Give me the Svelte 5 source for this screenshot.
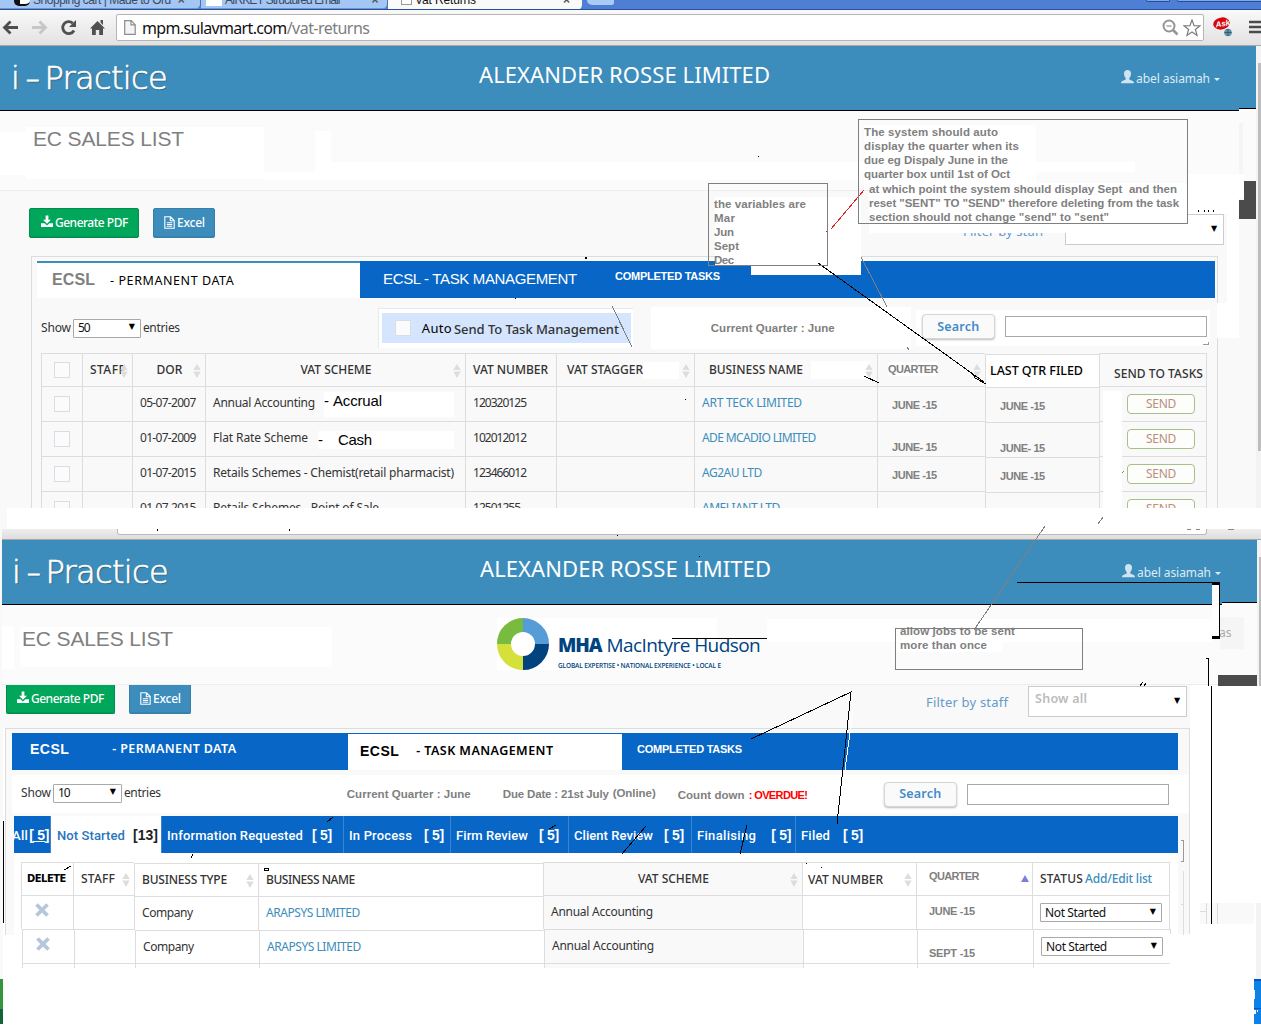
<script>
  // Spreads a label's letters so that it takes up the given width.
  function fit(node, width) {
    const apply = (w) => {
      node.style.letterSpacing = '0px';
      const n = node.textContent.length;
      const natural = node.getBoundingClientRect().width;
      if (n > 1) node.style.letterSpacing = (w - natural) / (n - 0.5) + 'px';
    };
    apply(width);
    return { update: apply };
  }

  const vatRows = [
    { date: '05-07-2007', scheme: 'Annual Accounting', sw: 102, no: '120320125', name: 'ART TECK LIMITED', nw: 100, q: 'JUNE -15', shift: 'a' },
    { date: '01-07-2009', scheme: 'Flat Rate Scheme', sw: 95, no: '102012012', name: 'ADE MCADIO LIMITED', nw: 114, q: 'JUNE- 15', shift: 'b' },
    { date: '01-07-2015', scheme: 'Retails Schemes - Chemist(retail pharmacist)', sw: 241, no: '123466012', name: 'AG2AU LTD', nw: 60, q: 'JUNE -15', shift: 'c' },
    { date: '01-07-2015', scheme: 'Retails Schemes - Point of Sale', sw: 166, no: '12501255', name: 'AMELIANT LTD', nw: 78, q: '', shift: 'a' }
  ];

  const stages = [
    { label: 'All', lw: 16, count: '[ 5]', gap: 1, w: 37, first: true },
    { label: 'Not Started', lw: 68, count: '[13]', gap: 8, w: 111, active: true },
    { label: 'Information Requested', lw: 136, count: '[ 5]', gap: 9, w: 182 },
    { label: 'In Process', lw: 63, count: '[ 5]', gap: 12, w: 107 },
    { label: 'Firm Review', lw: 72, count: '[ 5]', gap: 11, w: 118 },
    { label: 'Client Review', lw: 79, count: '[ 5]', gap: 11, w: 123 },
    { label: 'Finalising', lw: 59, count: '[ 5]', gap: 15, w: 104 },
    { label: 'Filed', lw: 29, count: '[ 5]', gap: 13, w: 120 }
  ];

  const jobs = [{ q: 'JUNE -15' }, { q: 'SEPT -15' }];
</script>

{#snippet sorter()}
  <svg class="sorter" width="8" height="14" viewBox="0 0 8 14"><path d="M4 0 7.700 6H.3zM4 14 .3 7.600h7.400z" /></svg>
{/snippet}

{#snippet siteHeader()}
  <header class="site">
    <div class="brand"><span>i</span><span class="dash">-</span><span use:fit={123}>Practice</span></div>
    <div class="company"><span use:fit={291}>ALEXANDER ROSSE LIMITED</span></div>
    <div class="user">
      <svg width="13" height="14" viewBox="0 0 13 14"><path d="M6.500 0C4.400 0 3 1.300 3 3.600c0 2 .8 3.600 1.700 4.500v1.300L1.300 11C.4 11.500 0 12 0 13.200h13c0-1.200-.4-1.700-1.300-2.200L8.300 9.400V8.100C9.200 7.200 10 5.600 10 3.600 10 1.300 8.600 0 6.500 0z" /></svg>
      <span use:fit={74}>abel asiamah</span>
      <i class="caret"></i>
    </div>
  </header>
{/snippet}

{#snippet actions()}
  <button class="btn green">
    <svg width="12" height="13" viewBox="0 0 13 13"><path d="M5 0h3v4.500h2.800L6.500 9 2.200 4.500H5zM0 8.300h3.800l2.700 2.600 2.700-2.600H13V12.500H0z" /></svg>
    <span use:fit={73}>Generate PDF</span>
  </button>
  <button class="btn blue">
    <svg width="11" height="13" viewBox="0 0 11 13"><path d="M.8.8h5.700l3.700 3.700v7.700H.8zM6.300.8v4h4M2.800 6.700h5.400M2.800 8.500h5.400M2.800 10.300h5.400" fill="none" stroke="currentColor" stroke-width="1.100" /></svg>
    <span use:fit={28}>Excel</span>
  </button>
{/snippet}

<div class="page">
  <div class="tabstrip">
    <div class="tab one"><i class="fav dark"></i><span use:fit={138}>Shopping cart | Made to Ord</span><b>×</b></div>
    <div class="tab two"><i class="fav"></i><span use:fit={115}>AIRKEY Structured Email</span><b>×</b></div>
    <div class="tab three"><i class="fav line"></i><span use:fit={61}>Vat Returns</span><b>×</b></div>
    <i class="newtab"></i>
    <i class="winbtn small"></i><i class="winbtn"></i>
  </div>
  <div class="toolbar">
    <svg class="nav" width="110" height="34" viewBox="0 0 110 34" fill="none">
      <path d="M18 17.500H5M10.500 11.500l-6 6 6 6" stroke="#4e4e4e" stroke-width="2.800" />
      <path d="M32 17.500h13M39.500 11.500l6 6-6 6" stroke="#c6c6c6" stroke-width="2.800" />
      <path d="M74 20.500a6 6 0 1 1-1.200-7.300" stroke="#505050" stroke-width="2.800" />
      <path d="M76 10v7h-7z" fill="#505050" />
      <path d="M90 18.500 97.500 11l7.500 7.500h-2V25h-3.800v-5h-3.400v5H92v-6.500zM100.500 10h2.500v5l-2.500-2.500z" fill="#505050" />
    </svg>
    <div class="omni">
      <svg width="12" height="15" viewBox="0 0 12 15"><path d="M.7.7h6.500l4 4v9.600H.7zM7 .7v4.200h4.200" fill="#f4f4f4" stroke="#8b8b8b" stroke-width="1.200" /></svg>
      <span class="host" use:fit={145}>mpm.sulavmart.com</span><span class="path" use:fit={83}>/vat-returns</span>
      <svg class="mag" width="17" height="17" viewBox="0 0 17 17" fill="none" stroke="#959595"><circle cx="7" cy="7" r="5.500" stroke-width="2" /><path d="M4.500 7h5" stroke-width="1.300" /><path d="m11 11 4.500 4.500" stroke-width="2.600" /></svg>
      <svg class="star" width="18" height="18" viewBox="0 0 18 18"><path d="M9 1l2.100 5.600 6 .2-4.700 3.700L14 16.400 9 13l-5 3.400 1.600-5.900L.9 6.800l6-.2z" fill="#fff" stroke="#7b7b7b" stroke-width="1.200" /></svg>
    </div>
    <svg class="ask" width="20" height="20" viewBox="0 0 20 20"><ellipse cx="8.500" cy="6.500" rx="8.300" ry="6" fill="#d3070d" transform="rotate(-12 8.500 6.500)" /><text x="2.500" y="9.500" transform="rotate(-10 8 7)">Ask</text><circle cx="15" cy="15.500" r="3.800" fill="#5d94ae" /><path d="M15 12v7M11.500 15.500h7" stroke="#456" stroke-width="1" /></svg>
    <svg class="burger" width="12" height="14" viewBox="0 0 12 14"><path d="M0 2h12M0 7h12M0 12h12" stroke="#4b4b4b" stroke-width="2.600" /></svg>
  </div>

  <section class="upper">
    {@render siteHeader()}
    <div class="heading">
      <h1><span use:fit={151}>EC SALES LIST</span></h1>
    </div>
    <div class="actions">
      {@render actions()}
      <span class="filter" use:fit={81}>Filter by staff</span>
      <div class="picker"><em></em><i>▼</i></div>
    </div>
    <div class="box">
      <nav class="bar">
        <div class="perm"><b use:fit={43}>ECSL</b><span use:fit={124}>- PERMANENT DATA</span></div>
        <div class="task"><span use:fit={194}>ECSL - TASK MANAGEMENT</span></div>
        <div class="done"><span use:fit={105}>COMPLETED TASKS</span></div>
      </nav>
      <div class="tools">
        <span use:fit={30}>Show</span>
        <div class="select"><span use:fit={12}>50</span><i>▼</i></div>
        <span use:fit={37}>entries</span>
        <div class="auto"><div><i class="check"></i><u use:fit={30}>Auto</u><b use:fit={165}>Send To Task Management</b></div></div>
        <div class="current"><span use:fit={124}>Current Quarter : June</span></div>
        <div class="searchwrap"><button class="search"><span use:fit={42}>Search</span></button><div class="input"></div></div>
      </div>
      <div class="vat">
        <div class="row head">
          <div class="cell c1"><i class="check"></i></div>
          <div class="cell c2"><span use:fit={35}>STAFF</span>{@render sorter()}</div>
          <div class="cell mid"><span use:fit={26}>DOR</span>{@render sorter()}</div>
          <div class="cell mid"><span use:fit={71}>VAT SCHEME</span>{@render sorter()}</div>
          <div class="cell c2"><span use:fit={75}>VAT NUMBER</span></div>
          <div class="cell stag"><span use:fit={76}>VAT STAGGER</span><i class="blot"></i>{@render sorter()}</div>
          <div class="cell biz"><span use:fit={94}>BUSINESS NAME</span><i class="blot"></i>{@render sorter()}</div>
          <div class="cell quarter"><span use:fit={50}>QUARTER</span>{@render sorter()}</div>
          <div class="cell last"><span use:fit={93}>LAST QTR FILED</span></div>
          <div class="cell send"><span use:fit={89}>SEND TO TASKS</span></div>
        </div>
        {#each vatRows as r, i}
          <div class="row">
            <div class="cell c1"><i class="check"></i></div>
            <div class="cell"></div>
            <div class="cell c3"><span use:fit={56}>{r.date}</span></div>
            <div class="cell c3">
              <span use:fit={r.sw}>{r.scheme}</span>
              {#if i === 0}<div class="typed accrual"><span>-</span><span use:fit={49}>Accrual</span></div>{/if}
              {#if i === 1}<div class="typed cash"><span>-</span><span use:fit={34}>Cash</span></div>{/if}
            </div>
            <div class="cell c3"><span use:fit={r.no.length * 5.950}>{r.no}</span></div>
            <div class="cell"></div>
            <div class="cell c3"><a use:fit={r.nw}>{r.name}</a></div>
            <div class="cell qtr {r.shift}"><span use:fit={45}>{r.q}</span></div>
            <div class="cell qtr wide {r.shift}"><span use:fit={45}>{r.q}</span></div>
            <div class="cell btncell"><button class="sendbtn"><span use:fit={30}>SEND</span></button></div>
          </div>
        {/each}
      </div>
    </div>
  </section>

  <div class="seam"></div>
  <div class="sliver"><div></div></div>

  <section class="lower">
    {@render siteHeader()}
    <div class="heading">
      <h1><span use:fit={151}>EC SALES LIST</span></h1>
      <div class="mha">
        <svg width="52" height="52" viewBox="0 0 52 52" fill="none" stroke-width="14">
          <path d="M7 26A19 19 0 0 1 26 7" stroke="#79bb3f" />
          <path d="M26 7a19 19 0 0 1 19 19" stroke="#569cd6" />
          <path d="M45 26A19 19 0 0 1 26 45" stroke="#00437f" />
          <path d="M26 45A19 19 0 0 1 7 26" stroke="#d5e03b" />
        </svg>
        <div class="words">
          <p><b use:fit={44}>MHA</b><span use:fit={154}>MacIntyre Hudson</span></p>
          <small use:fit={163}>GLOBAL EXPERTISE • NATIONAL EXPERIENCE • LOCAL E</small>
        </div>
      </div>
    </div>
    <div class="actions">
      {@render actions()}
      <span class="filter" use:fit={82}>Filter by staff</span>
      <div class="picker"><em use:fit={52}>Show all</em><i>▼</i></div>
    </div>
    <div class="box">
      <nav class="bar">
        <div class="perm"><b use:fit={39}>ECSL</b><span use:fit={124}>- PERMANENT DATA</span></div>
        <div class="task"><b use:fit={39}>ECSL</b><span use:fit={137}>- TASK MANAGEMENT</span></div>
        <div class="done"><span use:fit={105}>COMPLETED TASKS</span></div>
      </nav>
      <div class="tools">
        <span use:fit={30}>Show</span>
        <div class="select"><span use:fit={12}>10</span><i>▼</i></div>
        <span use:fit={37}>entries</span>
        <div class="dates">
          <span use:fit={124}>Current Quarter : June</span>
          <span use:fit={106}>Due Date : 21st July</span>
          <span class="online" use:fit={43}>(Online)</span>
          <span class="count" use:fit={67}>Count down</span>
          <span class="over" use:fit={59}>: OVERDUE!</span>
        </div>
        <button class="search"><span use:fit={42}>Search</span></button><div class="input"></div>
      </div>
      <nav class="stages">
        {#each stages as s}
          <div class="stage" class:active={s.active} class:first={s.first} style:width="{s.w}px">
            <span use:fit={s.lw}>{s.label}</span>
            <b style:margin-left="{s.gap}px" use:fit={s.active ? 25 : 20}>{s.count}</b>
          </div>
        {/each}
      </nav>
      <div class="jobs">
        <div class="row head">
          <div class="cell del"><span use:fit={39}>DELETE</span></div>
          <div class="cell c3"><span use:fit={34}>STAFF</span>{@render sorter()}</div>
          <div class="cell c3 low"><span use:fit={85}>BUSINESS TYPE</span>{@render sorter()}</div>
          <div class="cell c3 low"><span use:fit={89}>BUSINESS NAME</span></div>
          <div class="cell mid grey"><span use:fit={71}>VAT SCHEME</span>{@render sorter()}</div>
          <div class="cell c5"><span use:fit={75}>VAT NUMBER</span>{@render sorter()}</div>
          <div class="cell quarter"><span use:fit={50}>QUARTER</span><svg width="8" height="7" viewBox="0 0 8 7"><path d="M4 0l4 7H0z" fill="#7b80dd" /></svg></div>
          <div class="cell c3"><span use:fit={43}>STATUS</span><a use:fit={67}>Add/Edit list</a></div>
        </div>
        {#each jobs as j, i}
          <div class="row" class:second={i === 1}>
            <div class="cell x"><svg width="14" height="14" viewBox="0 0 14 14"><path d="m1.500 1.500 11 11M12.500 1.500l-11 11" stroke="#b5c7da" stroke-width="3.800" /></svg></div>
            <div class="cell"></div>
            <div class="cell c3 low"><span use:fit={51}>Company</span></div>
            <div class="cell c3 low"><a use:fit={94}>ARAPSYS LIMITED</a></div>
            <div class="cell c3 grey"><span use:fit={102}>Annual Accounting</span></div>
            <div class="cell"></div>
            <div class="cell due"><span use:fit={46}>{j.q}</span></div>
            <div class="cell c3"><div class="select"><span use:fit={61}>Not Started</span><i>▼</i></div></div>
          </div>
        {/each}
        <div class="row stub">
          {#each Array(8) as _, k}<div class="cell" class:grey={k === 4}></div>{/each}
        </div>
      </div>
    </div>
  </section>

  <!-- Reviewer's mark-up: erased areas, boxes and pointer lines laid over both screens -->
  <svg class="marks" width="1261" height="1027" viewBox="0 0 1261 1027" shape-rendering="crispEdges">
    <g fill="#f3f3f3">
      <path d="M1256 46h5v462h-5zM1257 540h4v146h-4zM1256 903h5v76h-5z" />
      <path d="M1258 63h3v388h-3zM1259 557h2v129h-2z" fill="#bdbdbd" />
    </g>
    <g fill="#fff">
      <path d="M1239 110h17v2h-17z" fill="#fbfbfb" />
      <path d="M1239 108h17v1h-17z" fill="#000" />
      <path d="M1239 109h17v3h-17z" fill="#fbfbfb" />
      <path d="M1239 123h4v62h-4z" fill="#f5f5f5" />
      <path d="M1244 181h12v38h-12zM1239 200h5v19h-5z" fill="#4b4b4b" />
      <path d="M0 132h26v43H0zM264 172h51v-41h16v31h529v18H264z" />
      <path d="M840 162h295v10H840zM1188 174h56v24h-56zM1197 198h42v16h-42z" />
      <path d="M1227 205h12v133h-12zM1217 303h10v35h-10zM1103 391h19v117h-19z" />
      <path d="M715 197h146v78H751v-9h-36zM864 125h172v58H864zM869 183h328v31h-9v19H869z" />
      <path d="M0 529h2v450H0zM2 686h3v42H2zM2 728h1v251H2z" fill="#f9f9f9" />
      <path d="M2 626h12v43H2z" />
      <path d="M1190 686h71v217h-71zM1190 903h10v124h-10zM1170 934h84v93h-84zM0 1024h1261v3H0z" />
      <path d="M1254 979h7v45h-7z" fill="#0d82e6" />
      <path d="M1254 979h7v2h-7zM1254 1008h7v1h-7z" fill="#0754bd" />
      <path d="M1254 990h1v9h-1zM1254 1010h2v4h-2zM1257 1010h1v2h-1z" />
      <path d="M0 979h3v45H0z" fill="#34963a" /><path d="M0 1009h3v15H0z" fill="#136437" />
    </g>
    <path d="M1200 903h54v21h-54z" fill="#f9f9f9" />
    <path d="M1206.500 903v21M1217.500 903v21M1200 911.500h6" stroke="#ddd" />
    <path d="M1181 840.500h2.500v20.500h-2.500" stroke="#999" fill="none" />
    <path d="M1183.500 871v64M1181 904.500h3" stroke="#ddd" />
    <path d="M1222 602h35v1h-35z" fill="#000" /><path d="M1222 603h35v2h-35z" fill="#fbfbfb" />
    <path d="M1220 617h24v32h-24z" fill="#f5f5f5" />
    <path d="M1218 675h39v11h-39z" fill="#4b4b4b" />
    <path d="M767 619h445v23h-210v10H895v-10h-128z" fill="#fff" />
    <text class="as" x="1219" y="637">as</text>
    <path d="M1212 583h7v54h-7z" fill="#fff" />
    <path d="M1017 582.500h203M1219.500 582v56" stroke="#000" /><path d="M1212 583.500h8M1212 637.500h8" stroke="#000" stroke-width="2.500" />
    <path d="M1206 658.500h3M1208.500 658v28M1211.500 686v238M3.500 821v102M672 638.500h95" stroke="#000" />
    <path d="M1207 284.500v-3M1203 344.500h5v-3" stroke="#999" fill="none" />
    <path d="M1207 280h2v6h-2z" fill="#0766c6" />
    <path d="M758 156h1v1h-1zM585 257h2v2h-2zM515 298h1v1h-1zM685 399h1v1h-1zM617 535h1v1h-1zM699 556h1v1h-1zM806 863h1v1h-1zM821 867h1v1h-1zM157 529h1v2h-1zM289 529h1v2h-1zM1198 210h1v2h-1zM1204 210h1v2h-1zM1208 210h1v2h-1zM1213 210h1v2h-1z" />
    <path d="M1187 529h4v1h-4zM1196 529h4v1h-4zM1228 529h6v1h-6z" fill="#888" />
    <path d="M264.500 868.500h4v2h-4z" fill="#fff" stroke="#000" />
    <g fill="none" stroke="#000">
      <path d="M818 263 984 382M972 373l3 5 11 6M864 376l15 7" />
      <path d="m751 739 100-47-14 132M64 870l7-4M191 858l2-4M327 822l6-5M622 854l24-28M740 854l7-29M549 829l7-4M1140 686l3-4M1144 686l2-3" />
      <path d="m853 710-8 60" stroke="#fff" />
    </g>
    <path d="m831 229 33-39" stroke="#d22" fill="none" /><path d="M826 231h2" stroke="#d22" />
    <g fill="none" stroke="#7f7f7f">
      <rect x="858.500" y="119.500" width="329" height="104" />
      <rect x="708.500" y="183.500" width="119" height="82" />
      <rect x="895.500" y="628.500" width="187" height="41" />
      <path d="m612 306 20 41M861 257l26 50M907 347l2 3M1045 526l-71 104M1098 524l5-7M1122 473l2-2" />
    </g>
  </svg>

  <div class="note rules">
    <p><span use:fit={134}>The system should auto</span></p>
    <p><span use:fit={155}>display the quarter when its</span></p>
    <p><span use:fit={144}>due eg Dispaly June in the</span></p>
    <p><span use:fit={146}>quarter box until 1st of Oct</span></p>
    <p class="in gap"><span use:fit={308}>at which point the system should display Sept &nbsp;and then</span></p>
    <p class="in"><span use:fit={310}>reset "SENT" TO "SEND" therefore deleting from the task</span></p>
    <p class="in"><span use:fit={240}>section should not change "send" to "sent"</span></p>
  </div>
  <div class="note months">
    <p><span use:fit={92}>the variables are</span></p>
    <p><span use:fit={21}>Mar</span></p>
    <p><span use:fit={20}>Jun</span></p>
    <p><span use:fit={25}>Sept</span></p>
    <p><span use:fit={20}>Dec</span></p>
  </div>
  <div class="note resend">
    <p><span use:fit={115}>allow jobs to be sent</span></p>
    <p><span use:fit={87}>more than once</span></p>
  </div>
</div>

<style>
  :global(body) { background: #fff; }
  .page { position: relative; width: 1261px; height: 1027px; overflow: hidden; background: #fff; font: 12px/16px "Noto Sans", sans-serif; color: #333; }
  .page :global(*) { box-sizing: border-box; }
  span, b, a, u, em, small { white-space: nowrap; flex: none; display: inline-block; }
  p, h1 { margin: 0; }
  button { font: inherit; padding: 0; margin: 0; display: flex; align-items: center; }
  i, em { font-style: normal; }
  u { text-decoration: none; }
  a { color: #3c8dbc; }
  svg { flex: none; }

  .tabstrip { height: 10px; background: #4f7fd5; border-bottom: 1px solid #27509c; display: flex; overflow: hidden; font: 12px/14px "Liberation Sans", sans-serif; color: #3c4a60; }
  .tab { background: #a3c6f4; height: 9px; display: flex; align-items: flex-start; border-right: 1px solid #4774ad; border-bottom: 1px solid #6d96cd; border-bottom-right-radius: 5px; flex: none; }
  .tab span, .tab b { margin-top: -7px; }
  .tab b { font-weight: 700; color: #555; }
  .one { width: 201px; padding-left: 14px; }
  .two { width: 187px; padding-left: 5px; }
  .three { width: 194px; padding-left: 13px; background: #fafafa; color: #111; height: 10px; border: 0; }
  .one b { margin-left: 7px; }
  .two b { margin-left: 32px; }
  .three b { margin-left: 87px; }
  .fav { width: 16px; height: 6px; background: #fff; margin-right: 3px; }
  .dark { border-left: 6px solid #111; border-bottom: 2px solid #111; border-radius: 0 0 5px 5px; }
  .line { width: 11px; height: 5px; border: 1px solid #999; border-top: 0; margin-right: 3px; }
  .newtab { width: 27px; height: 5px; margin-left: 5px; background: #a9cbf6; border-radius: 0 0 3px 6px; flex: none; }
  .winbtn { width: 110px; height: 2px; border: 1px solid #254d95; border-top: 0; background: #81a8e6; border-radius: 0 0 4px 4px; margin-left: 7px; flex: none; }
  .winbtn.small { width: 24px; margin-left: 532px; }

  .toolbar { height: 36px; background: linear-gradient(#f9f9f9, #e2e2e2); border-bottom: 1px solid #a9a6a4; display: flex; align-items: flex-start; }
  .nav { margin-right: 6px; }
  .omni { width: 1090px; height: 27px; margin-top: 4px; border: 1px solid #b5b5b5; border-radius: 2px; background: #fff; display: flex; align-items: center; padding-left: 7px; font-size: 16px; line-height: 24px; }
  .host { color: #111; margin-left: 6px; }
  .path { color: #7d7d7d; }
  .mag { margin-left: auto; }
  .star { margin: 0 2px 0 4px; }
  .ask { margin: 7px 0 0 9px; }
  .ask text { font: italic 700 8px "Liberation Sans", sans-serif; fill: #fff; }
  .burger { margin: 10px 0 0 16px; }

  .upper { height: 462px; overflow: hidden; background: #f9f9f9; }
  .site { height: 65px; background: #3c8dbc; border-bottom: 1px solid #000; display: grid; grid-template-columns: 479px 642px 1fr; align-items: center; }
  .upper .site { width: 1256px; }
  .brand { display: flex; padding-left: 11px; color: #fff; font: 200 32px/36px "DejaVu Sans", sans-serif; -webkit-text-stroke: 0.700px #fff; text-shadow: 1px 1px 1px #36576d; }
  .brand .dash { transform: scaleX(1.300); margin: 0 6px 0 7px; }
  .company { color: #fff; font-size: 22px; line-height: 30px; margin-bottom: 8px; }
  .user { display: flex; align-items: center; color: #dcebf5; margin-top: 1px; }
  .user svg { fill: #cfe3f0; margin: 0 2px 4px 0; }
  .caret { border: 3px solid transparent; border-top-color: #dcebf5; margin: 5px 0 0 4px; }
  .heading { height: 80px; background: #fbfbfb; border-bottom: 1px solid #eee; }
  h1 { width: 238px; height: 52px; margin-left: 26px; padding-left: 7px; background: #fff; font: 400 21px/24px "Liberation Sans", sans-serif; color: #808080; }
  .upper .heading { padding-top: 16px; }
  .actions { display: flex; align-items: flex-start; }
  .upper .actions { height: 65px; padding: 17px 0 0 29px; }
  .btn { height: 30px; color: #fff; border: 1px solid #008d4c; border-radius: 2px; background: #00a65a; font-weight: 500; box-shadow: inset 0 -1px 0 #00000012; }
  .btn.green { width: 110px; padding-left: 11px; }
  .btn.blue { width: 62px; margin-left: 14px; padding-left: 10px; background: #3c8dbc; border-color: #367fa9; }
  .green svg { fill: #fff; margin: 0 2px 3px 0; }
  .blue svg { margin: 0 2px 1px 0; }
  .filter { color: #6699cc; font-size: 13px; line-height: 18px; }
  .upper .filter { margin: 14px 21px 0 748px; }
  .picker { width: 159px; height: 31px; border: 1px solid #ccc; background: #fff; display: flex; justify-content: space-between; padding: 3px 6px 0 6px; }
  .upper .picker { margin-top: 6px; }
  .picker em { color: #bbb; font-weight: 600; font-size: 12.500px; line-height: 18px; }
  .picker i { font: 8px/22px "DejaVu Sans", sans-serif; color: #000; }
  .box { border: 1px solid #ddd; border-width: 1px 1px 0; }
  .upper .box { width: 1187px; height: 252px; margin-left: 31px; padding: 4px 0 0 5px; }
  .bar { display: flex; height: 37px; background: #0766c6; color: #fff; }
  .upper .bar { width: 1178px; }
  .bar div { display: flex; align-items: center; }
  .done { font: 700 11px/14px "Liberation Sans", sans-serif; padding-bottom: 6px; }
  .upper .done { padding-bottom: 8px; }
  .upper .perm { width: 323px; background: #fff; border-top: 2px solid #3c8dbc; color: #000; padding: 0 0 1px 15px; }
  .upper .perm b { font: 700 16px/18px "Liberation Sans", sans-serif; color: #808080; margin-right: 15px; }
  .perm span { font-size: 12.500px; }
  .upper .perm span { padding-top: 1px; }
  .upper .task { padding: 0 0 2px 23px; width: 255px; font: 15px/18px "Liberation Sans", sans-serif; }
  .tools { display: flex; align-items: center; }
  .upper .tools { height: 55px; margin-left: 4px; padding-bottom: 1px; padding-top: 6px; }
  .select { display: flex; justify-content: space-between; align-items: center; width: 68px; height: 19px; border: 1px solid #a9a9a9; border-radius: 1px; background: #fff; color: #111; padding: 0 5px 0 4px; margin: 0 2px 0 2px; }
  .select i { font: 8px/14px "DejaVu Sans", sans-serif; color: #000; margin-bottom: 2px; }
  .auto { margin-left: 198px; width: 255px; height: 40px; padding: 4px 0 0 3px; background: #fff; border-top: 1px solid #e6e9ef; border-left: 1px solid #e6e9ef; }
  .auto div { width: 249px; height: 30px; background: #d4e5fd; display: flex; align-items: center; padding-left: 13px; }
  .auto u { color: #000; font-size: 13px; margin: 0 2px 0 11px; }
  .auto b { font-weight: 500; font-size: 13px; padding-top: 2px; }
  .check { width: 16px; height: 16px; border: 1px solid #ddd; background: #fbfbfd; flex: none; }
  .current { width: 260px; height: 42px; margin-left: 18px; padding-left: 60px; background: #fff; display: flex; align-items: center; font: 700 11.500px/14px "Liberation Sans", sans-serif; color: #808080; }
  .searchwrap { display: flex; align-items: center; background: #fff; margin-left: 5px; padding: 0 0 3px 6px; height: 36px; width: 294px; }
  .search { width: 73px; height: 25px; border: 1px solid #d6d6d6; border-radius: 4px; background: #fafafa; box-shadow: 0 1px 2px #bbb; justify-content: center; color: #428bca; font-weight: 600; font-size: 12.500px; flex: none; }
  .input { width: 202px; height: 21px; border: 1px solid #a9a9a9; background: #fff; margin-left: 10px; flex: none; }
  .upper .input { position: relative; top: 0; }

  .row { display: grid; height: 35px; }
  .cell { border-left: 1px solid #ddd; border-top: 1px solid #ddd; display: flex; align-items: center; position: relative; min-width: 0; }
  .cell:last-child { border-right: 1px solid #ddd; }
  .vat { margin-left: 4px; }
  .vat .row { grid-template-columns: 41px 50px 73px 260px 91px 138px 183px 108px 114px 108px; width: 1166px; }
  .head { font-weight: 500; }
  .vat .head { height: 33px; }
  .vat .row > .c1 { padding-left: 12px; padding-bottom: 0; }
  .c2 { padding-left: 7px; }
  .c3 { padding-left: 7px; }
  .vat .c3 { padding-bottom: 2px; }
  .mid { justify-content: center; }
  .mid span { margin-left: 1px; }
  .sorter { position: absolute; right: 4px; top: 10px; fill: #ddd; }
  .stag { padding-left: 10px; }
  .stag .blot { width: 36px; height: 17px; background: #fff; }
  .biz { padding-left: 14px; }
  .biz .blot { width: 58px; height: 18px; background: #fff; margin-left: 8px; }
  .quarter { padding-left: 10px; padding-bottom: 2px; font: 700 11px/14px "Liberation Sans", sans-serif; color: #808080; }
  .quarter span { background: #fff; }
  .vat .last { background: #fff; color: #000; padding-left: 4px; font-size: 12.500px; }
  .vat .send { padding: 8px 0 0 14px; }
  .row > .wide, .row > .last { top: 1px; }
  .typed { position: absolute; background: #fff; color: #000; font: 15px/18px "Liberation Sans", sans-serif; display: flex; }
  .accrual { left: 118px; top: 5px; width: 130px; height: 25px; gap: 4px; }
  .cash { left: 112px; top: 9px; width: 136px; height: 18px; gap: 15px; }
  .qtr { padding-left: 14px; font: 700 11px/14px "Liberation Sans", sans-serif; color: #808080; }
  .a { padding-top: 1px; }
  .b { padding-top: 15px; }
  .c { padding-top: 1px; }
  .btncell { padding-left: 27px; }
  .sendbtn { width: 68px; height: 20px; border: 1px solid #a5c08c; border-radius: 4px; background: #fdfdfb; color: #b98f7c; justify-content: center; }

  .seam { height: 21px; background: #fff; border-left: 7px solid #f9f9f9; }
  .sliver { height: 11px; margin-left: 2px; background: linear-gradient(#eee, #ddd); border-bottom: 1px solid #a9a6a4; padding-left: 115px; }
  .sliver div { width: 1090px; height: 6px; background: #fff; border: 1px solid #bbb; border-top: 0; border-radius: 0 0 3px 3px; }

  .lower { width: 1255px; margin-left: 2px; height: 487px; }
  .lower .site { grid-template-columns: 478px 642px 1fr; }
  .lower .brand { padding-left: 10px; }
  .lower .heading { padding-top: 22px; display: flex; }
  .lower h1 { width: 312px; height: 40px; margin-left: 18px; padding-left: 2px; }
  .mha { display: flex; margin: -9px 0 0 165px; width: 220px; background: #fff; height: 52px; }
  .words { margin: 14px 0 0 9px; color: #00437f; }
  .words p { display: flex; font: 19px/26px "Open Sans", sans-serif; gap: 5px; }
  .words b { font-weight: 800; }
  .words small { font: 600 6.500px/16px "Open Sans", sans-serif; display: inline-block; vertical-align: top; }
  .lower .actions { height: 43px; width: 1188px; padding: 0 0 0 4px; background: #f9f9f9; }
  .lower .btn { height: 29px; border-top: 0; border-radius: 0 0 2px 2px; }
  .lower .btn.green { width: 109px; padding-left: 10px; }
  .lower .filter { margin: 8px 20px 0 735px; }
  .lower .picker { margin-top: 1px; }
  .lower .box { width: 1185px; height: 207px; margin-left: 3px; padding: 4px 0 0 6px; background: #f9f9f9; }
  .lower .bar { width: 1166px; }
  .lower .perm { width: 336px; padding: 0 0 6px 18px; font-weight: 600; }
  .lower .perm b, .lower .task b { font: 700 14px/18px "Liberation Sans", sans-serif; margin-right: 43px; }
  .lower .task { width: 274px; background: #fff; color: #000; padding: 0 0 2px 12px; border-top: 1px solid #0766c6; font-size: 12.500px; font-weight: 600; }
  .lower .task b { margin-right: 17px; }
  .lower .done { padding-left: 15px; }
  .lower .tools { height: 46px; padding: 0 0 2px 9px; background: #fff; border-top: 5px solid #f9f9f9; border-bottom: 3px solid #f9f9f9; }
  .lower .tools .select { width: 69px; }
  .dates { display: flex; margin-left: 186px; width: 537px; font: 700 11.500px/14px "Liberation Sans", sans-serif; color: #808080; padding-top: 2px; }
  .dates span:nth-child(2) { margin-left: 32px; }
  .online { margin: -1px 0 0 4px; }
  .count { margin: 1px 0 0 22px; }
  .over { color: #f00; margin: 1px 0 0 4px; font-size: 11px; }
  .lower .search { position: relative; top: 1px; }
  .lower .input { position: relative; top: 1px; }
  .stages { display: flex; width: 1164px; height: 37px; margin-left: 2px; background: #0766c6; color: #fff; font: 500 13px/18px Roboto, sans-serif; overflow: hidden; }
  .stage { display: flex; align-items: center; padding-left: 5px; border-right: 1px solid #3b84d0; flex: none; }
  .stage:last-child { border: 0; }
  .stage.first { padding-left: 0; }
  .stage.first span { margin-left: -2px; }
  .stage.first b { text-decoration: underline; }
  .stage.active { background: #fff; color: #2a75c0; padding-left: 6px; }
  .stage span { padding-top: 2px; }
  .stage b { font: 700 14px/18px "Liberation Sans", sans-serif; }
  .stage.active b { color: #222; }

  .jobs { background: #fff; margin-left: 2px; padding: 9px 0 0 7px; width: 1164px; height: 120px; }
  .jobs .row { grid-template-columns: 52px 61px 124px 285px 259px 114px 116px 138px; width: 1149px; height: 34px; }
  .jobs .head { height: 33px; }
  .jobs .second { margin-left: 1px; }
  .jobs .stub { height: 5px; margin-left: 1px; }
  .jobs .cell { padding-bottom: 1px; }
  .low { top: 1px; }
  .grey { background: #f9f9f9; }
  .c5 { padding-left: 5px; padding-top: 2px; }
  .del { padding-left: 5px; font: 700 11px/14px "DejaVu Sans Condensed", "DejaVu Sans", sans-serif; color: #000; }
  .jobs .x { padding: 0 0 5px 13px; }
  .jobs .quarter { padding-left: 12px; padding-bottom: 6px; }
  .jobs .quarter svg { margin: 5px 0 0 42px; }
  .jobs .due { padding-left: 12px; padding-bottom: 3px; font: 700 11px/14px "Liberation Sans", sans-serif; color: #808080; }
  .jobs .second .due { padding: 12px 0 0 11px; }
  .jobs .head a { margin-left: 2px; }
  .jobs .select { width: 122px; margin: 1px 0 0; padding: 0 5px 0 4px; }

  .marks { position: absolute; left: 0; top: 0; }
  .as { font: 12px "Noto Sans", sans-serif; fill: #aaa; }
  .note { position: absolute; color: #808080; font: 700 11.500px/14px "Liberation Sans", sans-serif; }
  .rules { left: 864px; top: 125px; }
  .rules .in { padding-left: 5px; }
  .rules .gap { padding-top: 1px; }
  .months { left: 714px; top: 197px; }
  .resend { left: 900px; top: 624px; }
</style>
